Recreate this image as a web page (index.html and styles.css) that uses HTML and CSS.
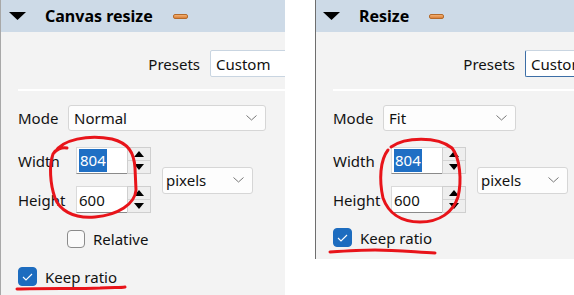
FILE: index.html
```html
<!DOCTYPE html>
<html>
<head>
<meta charset="utf-8">
<link rel="stylesheet" href="styles.css">
</head>
<body>
<div class="wrap">
  <section class="panel panel-left">
    <div class="header">
      <svg class="tri" width="17" height="8" viewBox="0 0 17 8"><polygon points="0,0 17,0 8.5,8" fill="#000"/></svg>
      <span class="title">Canvas resize</span>
      <span class="dash"></span>
    </div>
    <div class="presets">
      <span class="plabel">Presets</span>
      <div class="pinput">Custom</div>
    </div>
    <div class="sep"></div>
    <div class="content">
      <div class="row mode">
        <span class="lbl lbl-mode">Mode</span>
        <div class="select select-wide"><span>Normal</span><svg class="chev" width="11" height="6" viewBox="0 0 11 6"><polyline points="0.5,0.5 5.5,5 10.5,0.5" fill="none" stroke="#777" stroke-width="1"/></svg></div>
      </div>
      <div class="dims">
        <span class="lbl">Width</span>
        <div class="spin"><div class="field"><span class="sel">804</span></div><div class="btns"><div class="btn"><svg width="10" height="6" viewBox="0 0 10 6"><polygon points="0,6 10,6 5,0" fill="#000"/></svg></div><div class="btn"><svg width="10" height="6" viewBox="0 0 10 6"><polygon points="0,0 10,0 5,6" fill="#000"/></svg></div></div></div>
        <div class="select select-unit"><span>pixels</span><svg class="chev" width="11" height="6" viewBox="0 0 11 6"><polyline points="0.5,0.5 5.5,5 10.5,0.5" fill="none" stroke="#777" stroke-width="1"/></svg></div>
        <span class="lbl">Height</span>
        <div class="spin"><div class="field"><span>600</span></div><div class="btns"><div class="btn"><svg width="10" height="6" viewBox="0 0 10 6"><polygon points="0,6 10,6 5,0" fill="#000"/></svg></div><div class="btn"><svg width="10" height="6" viewBox="0 0 10 6"><polygon points="0,0 10,0 5,6" fill="#000"/></svg></div></div></div>
      </div>
      <div class="check check-rel"><span class="box"></span><span>Relative</span></div>
      <div class="check check-keep"><span class="box on"><svg width="11" height="8" viewBox="0 0 11 8"><polyline points="1,4 4,7 10,1" fill="none" stroke="#fff" stroke-width="1.1"/></svg></span><span>Keep ratio</span></div>
    </div>
  </section>
  <section class="panel panel-right">
    <div class="header">
      <svg class="tri" width="17" height="8" viewBox="0 0 17 8"><polygon points="0,0 17,0 8.5,8" fill="#000"/></svg>
      <span class="title">Resize</span>
      <span class="dash"></span>
    </div>
    <div class="presets">
      <span class="plabel">Presets</span>
      <div class="pinput focus">Custom</div>
    </div>
    <div class="sep"></div>
    <div class="content">
      <div class="row mode">
        <span class="lbl lbl-mode">Mode</span>
        <div class="select select-narrow"><span>Fit</span><svg class="chev" width="11" height="6" viewBox="0 0 11 6"><polyline points="0.5,0.5 5.5,5 10.5,0.5" fill="none" stroke="#777" stroke-width="1"/></svg></div>
      </div>
      <div class="dims">
        <span class="lbl">Width</span>
        <div class="spin"><div class="field"><span class="sel">804</span></div><div class="btns"><div class="btn"><svg width="10" height="6" viewBox="0 0 10 6"><polygon points="0,6 10,6 5,0" fill="#000"/></svg></div><div class="btn"><svg width="10" height="6" viewBox="0 0 10 6"><polygon points="0,0 10,0 5,6" fill="#000"/></svg></div></div></div>
        <div class="select select-unit"><span>pixels</span><svg class="chev" width="11" height="6" viewBox="0 0 11 6"><polyline points="0.5,0.5 5.5,5 10.5,0.5" fill="none" stroke="#777" stroke-width="1"/></svg></div>
        <span class="lbl">Height</span>
        <div class="spin"><div class="field"><span>600</span></div><div class="btns"><div class="btn"><svg width="10" height="6" viewBox="0 0 10 6"><polygon points="0,6 10,6 5,0" fill="#000"/></svg></div><div class="btn"><svg width="10" height="6" viewBox="0 0 10 6"><polygon points="0,0 10,0 5,6" fill="#000"/></svg></div></div></div>
      </div>
      <div class="check check-keep-r"><span class="box on"><svg width="11" height="8" viewBox="0 0 11 8"><polyline points="1,4 4,7 10,1" fill="none" stroke="#fff" stroke-width="1.1"/></svg></span><span>Keep ratio</span></div>
    </div>
  </section>
</div>
<svg class="marks" width="574" height="295" viewBox="0 0 574 295">
  <g fill="none" stroke="#e8141a" stroke-width="3" stroke-linecap="round" stroke-linejoin="round">
    <path d="M 55 152 C 62 140, 88 134, 112 139 C 128 143, 134 152, 135 168 L 136 190 C 135 204, 118 215, 95 217 C 72 219, 59 209, 55 198 C 50 184, 49 165, 53 154 C 56 149, 62 147, 67 148"/>
    <path d="M 17 289 C 45 288, 80 289, 100 288 C 112 287, 120 288, 125 287"/>
    <path d="M 391 147 C 405 137, 437 136, 452 148 C 460 158, 462 180, 458 197 C 453 212, 440 222, 420 222 C 400 222, 388 212, 383 198 C 379 180, 380 160, 388 150"/>
    <path d="M 330 252 C 345 251, 360 250, 375 250 C 395 250, 415 252, 435 253"/>
  </g>
</svg>
</body>
</html>
```
FILE: styles.css
```css
* { box-sizing: border-box; }
html, body { margin: 0; padding: 0; }
body {
  width: 574px;
  height: 295px;
  overflow: hidden;
  background: #fff;
  font-family: "Noto Sans", "Segoe UI", sans-serif;
  font-size: 15px;
  color: #111;
  position: relative;
}
.wrap {
  display: flex;
  align-items: flex-start;
}
.panel {
  background: #f3f3f3;
  overflow: hidden;
}
.panel-left {
  width: 285px;
  height: 295px;
  border-left: 1px solid #a8a8a8;
}
.panel-right {
  width: 259px;
  height: 259px;
  margin-left: 30px;
  border-left: 1px solid #6e6e6e;
}
.header {
  height: 32px;
  background: #cddae7;
  display: flex;
  align-items: center;
  padding-left: 8px;
}
.panel-right .header { padding-left: 7px; }
.tri { flex: none; margin-top: -1px; }
.title {
  font-weight: bold;
  font-size: 16px;
  margin-left: 19px;
  color: #000;
}
.dash {
  width: 15px;
  height: 5px;
  margin-left: 20px;
  border-radius: 2px;
  background: linear-gradient(#f3b173, #d9803a);
  border: 1px solid #b56a2a;
}
.presets {
  display: flex;
  align-items: center;
  margin-top: 18px;
  height: 27px;
}
.plabel {
  width: 199px;
  text-align: right;
  margin-right: 10px;
  flex: none;
}
.pinput {
  flex: none;
  width: 120px;
  height: 27px;
  background: #fff;
  border: 1px solid #c9d5e1;
  border-radius: 2px;
  padding-left: 5px;
  display: flex;
  align-items: center;
}
.pinput.focus {
  border-left-color: #3c6ea6;
  border-bottom-color: #3c6ea6;
}
.sep {
  height: 2px;
  background: #fff;
  margin: 12px 0 0 17px;
}
.content {
  padding-left: 17px;
}
.row { display: flex; align-items: center; }
.mode { margin-top: 14px; height: 26px; }
.lbl-mode { width: 50px; flex: none; }
.select {
  height: 26px;
  background: #fdfdfd;
  border: 1px solid #d6d6d6;
  border-radius: 3px;
  display: flex;
  align-items: center;
  padding-left: 5px;
  padding-right: 8px;
}
.select .chev { margin-left: auto; }
.select-wide { width: 198px; }
.select-narrow { width: 133px; }
.select-unit {
  width: 91px;
  height: 27px;
  padding-left: 3px;
  grid-column: 3;
  grid-row: 1 / span 2;
  align-self: center;
  margin-left: 11px;
}
.dims {
  display: grid;
  grid-template-columns: 58px 75px 102px;
  grid-template-rows: 27px 27px;
  row-gap: 12px;
  margin-top: 16px;
  align-items: center;
}
.spin {
  display: flex;
  height: 27px;
  width: 75px;
}
.field {
  flex: 1;
  background: #fff;
  border: 1px solid #dadada;
  border-bottom-color: #8a8a8a;
  border-right: none;
  display: flex;
  align-items: center;
  padding-left: 2px;
}
.sel {
  background: #1f6fc4;
  color: #fff;
  padding: 1px 1px 2px 1px;
}
.btns {
  width: 24px;
  display: flex;
  flex-direction: column;
  border: 1px solid #cfcfcf;
  background: #eeeeee;
}
.btn {
  flex: 1;
  display: flex;
  align-items: center;
  justify-content: center;
}
.btn + .btn { border-top: 1px solid #d4d4d4; }
.check {
  display: flex;
  align-items: center;
}
.box {
  width: 19px;
  height: 19px;
  border: 1px solid #8b8b8b;
  border-radius: 4px;
  background: #fafafa;
  margin-right: 8px;
  display: flex;
  align-items: center;
  justify-content: center;
  flex: none;
}
.box.on {
  background: #1d6cbf;
  border-color: #1d6cbf;
}
.check-rel { margin-top: 17px; margin-left: 49px; height: 18px; }
.check-rel .box { width: 18px; height: 18px; }
.check-keep { margin-top: 19px; height: 19px; margin-left: 0; }
.check-keep-r { margin-top: 15px; height: 19px; }
.marks {
  position: absolute;
  left: 0;
  top: 0;
  pointer-events: none;
}
```
